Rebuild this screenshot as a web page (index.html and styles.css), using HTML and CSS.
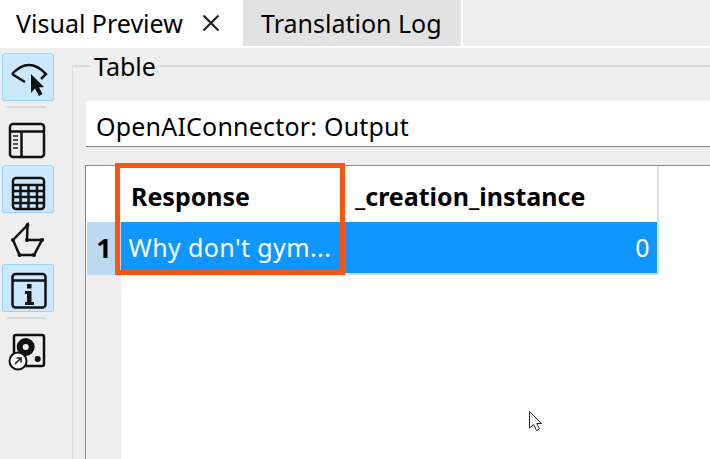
FILE: index.html
```html
<!DOCTYPE html>
<html lang="en">
  <head>
    <meta charset="UTF-8" />
    <title>Visual Preview</title>
    <link rel="stylesheet" href="styles.css">
  </head>
  <body>
    <ul class="tabs">
      <li class="tab on">
        <span>Visual Preview</span>
        <svg class="close" viewBox="0 0 18 18"><path d="M1.500 1.500 16.500 16.500M16.500 1.500 1.500 16.500" /></svg>
      </li>
      <li class="tab other">Translation Log</li>
    </ul>
    <div class="main">
      <div class="sidebar">
        <div class="tool on">
          <svg viewBox="2 53 52 48">
            <path class="line" d="M12 74Q29 56 46 74L41 79M12 74 25 82" />
            <path class="solid" d="M31 74V93L35 88.500 39 96 42.500 94 39 87.500 44 87Z" />
          </svg>
        </div>
        <div class="sep"></div>
        <div class="tool">
          <svg viewBox="2 116 52 48">
            <rect class="line" x="10" y="124" width="34" height="33" rx="3" />
            <path class="line" d="M10 131.500H44M21.500 131.500V157" />
            <path class="thin" d="M13 136H18M13 140H18M13 144H18M13 148H18" />
          </svg>
        </div>
        <div class="tool on">
          <svg viewBox="2 165 52 48">
            <rect class="line" x="13" y="178" width="31" height="31" rx="3" />
            <path class="line" d="M13 185H44M13 191H44M13 197H44M13 203H44M20.500 185V209M28.500 185V209M37 185V209" />
          </svg>
        </div>
        <div class="tool tall">
          <svg viewBox="2 213 52 48">
            <path class="line" d="M27.500 225 13 240 19.500 255H34L42 240H27Z" />
            <circle class="solid" cx="27.500" cy="225" r="2" />
            <circle class="solid" cx="13" cy="240" r="2" />
            <circle class="solid" cx="19.500" cy="255" r="2" />
            <circle class="solid" cx="34" cy="255" r="2" />
            <circle class="solid" cx="42" cy="240" r="2" />
            <circle class="solid" cx="27" cy="240" r="2" />
          </svg>
        </div>
        <div class="tool on">
          <svg viewBox="2 264 52 48">
            <rect class="line" x="12.500" y="274" width="33" height="33.500" rx="3" />
            <path class="line" d="M12.500 280.500H45.500" />
            <rect class="solid" x="27" y="284" width="4.500" height="4.500" />
            <path class="solid" d="M25 291H31.500V302H34V305H25V302H27V294H25Z" />
          </svg>
        </div>
        <div class="sep"></div>
        <div class="tool">
          <svg viewBox="2 327 52 48">
            <rect class="line" x="14" y="335" width="30" height="31" rx="2" />
            <circle class="disc" cx="25.700" cy="347" r="6" />
            <circle class="solid" cx="37.700" cy="359" r="3" />
            <circle class="badge" cx="18" cy="361" r="8.500" />
            <path class="thin" d="M15 364 21 358M16.500 358H21V362.500" />
          </svg>
        </div>
      </div>
      <fieldset class="group">
        <legend>Table</legend>
        <div class="source">OpenAIConnector: Output</div>
        <div class="frame">
          <div class="heads">
            <div class="corner"></div>
            <div class="num">1</div>
          </div>
          <div class="cols">
            <div class="col first">
              <div class="th">Response</div>
              <div class="td">Why don't gym...</div>
            </div>
            <div class="col second">
              <div class="th">_creation_instance</div>
              <div class="td right">0</div>
            </div>
          </div>
          <div class="mark"></div>
        </div>
      </fieldset>
    </div>
    <svg class="pointer" viewBox="0 0 14 20">
      <path d="M.5.500V17L4.500 13.500 7.500 19.500 10.500 18 7.800 12.500H12.500Z" />
    </svg>
  </body>
</html>
```

FILE: styles.css
```css
* {
  margin: 0;
  padding: 0;
  box-sizing: border-box;
}
ul {
  list-style: none;
}
html,
body {
  width: 710px;
  height: 459px;
  overflow: hidden;
}
body {
  position: relative;
  display: flex;
  flex-direction: column;
  background: #eee;
  color: #000;
  font-family: "Noto Sans", "Open Sans", sans-serif;
  font-size: 25px;
}
.tabs {
  display: flex;
  height: 48px;
  padding-bottom: 2px;
  background: linear-gradient(#eee 46px, #fff 46px);
}
.tab {
  display: flex;
  align-items: center;
  height: 46px;
}
.tab.on {
  width: 243px;
  padding-left: 16px;
  background: #fff;
}
.tab.other {
  width: 220px;
  padding-left: 18px;
  background: #e2e2e2;
  border-right: 2px solid #fff;
}
.close {
  width: 18px;
  height: 18px;
  margin-left: 19px;
  fill: none;
  stroke: #222;
  stroke-width: 2.200;
}
.main {
  flex: 1;
  display: flex;
  min-height: 0;
}
.sidebar {
  width: 72px;
  flex-shrink: 0;
  padding: 5px 0 0 2px;
}
.tool {
  width: 52px;
  height: 48px;
  border: 1px solid transparent;
  border-radius: 3px;
}
.tool.on {
  background: #cce8ff;
  border-color: #99d1ff;
}
.tool.tall {
  height: 51px;
}
.tool svg {
  display: block;
  width: 52px;
  height: 48px;
  margin: -1px;
}
.sep {
  width: 39px;
  height: 2px;
  margin: 5px 0 8px 5px;
  background: #d9d9d9;
}
.sep + .tool {
  margin-bottom: 1px;
}
.line {
  fill: none;
  stroke: #111;
  stroke-width: 2.500;
}
.thin {
  fill: none;
  stroke: #222;
  stroke-width: 1.600;
}
.solid {
  fill: #111;
}
.disc {
  fill: none;
  stroke: #111;
  stroke-width: 6;
}
.badge {
  fill: #fff;
  stroke: #111;
  stroke-width: 2;
}
.group {
  flex: 1;
  min-width: 0;
  margin-top: 1px;
  padding: 0 0 0 13px;
  border: 0;
  border-top: 2px solid #dcdcdc;
  border-left: 1px solid #dcdcdc;
}
.group legend {
  margin-left: 4px;
  padding: 0 4px;
  line-height: 34px;
}
.source {
  height: 46px;
  margin: 18px 0 0 0;
  padding-left: 10px;
  background: #fff;
  border-bottom: 1px solid #888;
  letter-spacing: .2px;
  line-height: 50px;
}
.frame {
  position: relative;
  display: flex;
  height: 300px;
  margin: 18px 0 0 -1px;
  padding: 1px 0 0 1px;
  background: #fff;
  border-top: 1px solid #8a8a96;
  border-left: 1px solid #8a8a96;
}
.heads {
  width: 34px;
  background: #eee;
}
.corner {
  height: 55px;
  background: #fff;
}
.num {
  height: 53px;
  background: #bbdaf2;
  font-size: 27px;
  font-weight: 700;
  line-height: 52px;
  text-align: center;
}
.cols {
  display: flex;
  align-items: flex-start;
}
.col.first {
  width: 224px;
}
.col.second {
  width: 314px;
  border-right: 2px solid #ddd;
}
.th {
  height: 55px;
  padding-left: 10px;
  font-weight: 700;
  line-height: 58px;
  white-space: nowrap;
}
.td {
  height: 53px;
  padding: 0 7px 0 7.500px;
  background: #0f96ff;
  border-bottom: 2px solid #d8d8d8;
  color: #fff;
  letter-spacing: .4px;
  line-height: 50px;
  white-space: nowrap;
}
.td.right {
  text-align: right;
}
.mark {
  position: absolute;
  left: 29px;
  top: -3px;
  width: 230px;
  height: 112px;
  border: 5px solid #fa5514;
}
.pointer {
  position: absolute;
  left: 529px;
  top: 411px;
  width: 14px;
  height: 20px;
  fill: #fff;
  stroke: #222;
  stroke-width: 1;
}
```
